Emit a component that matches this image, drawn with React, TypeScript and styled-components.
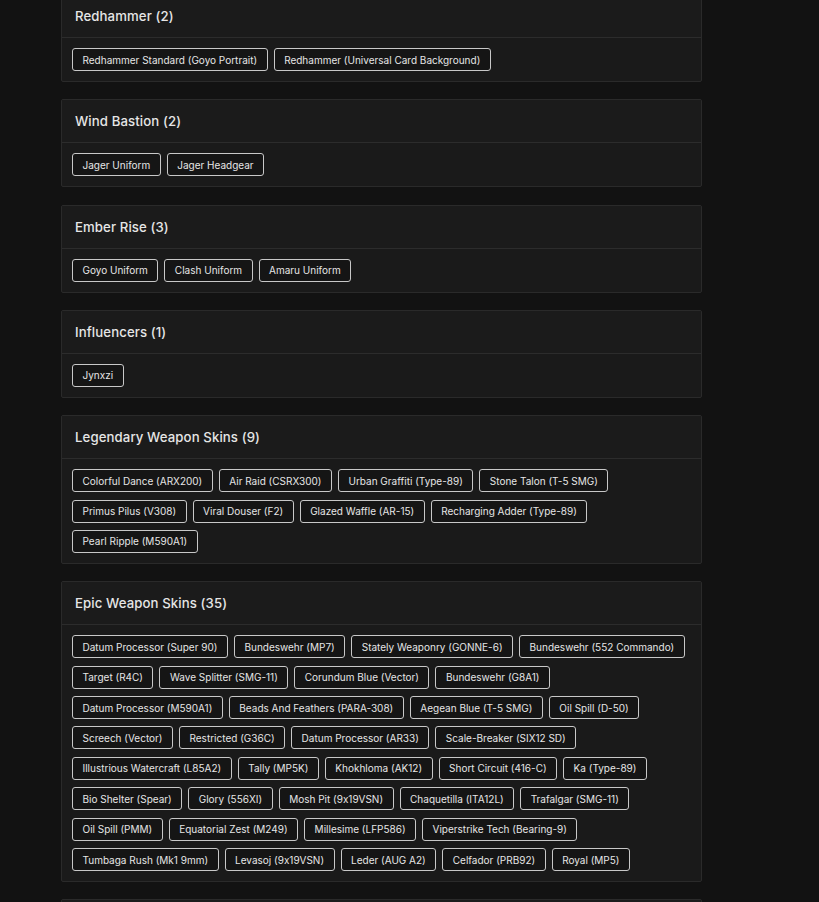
import { createGlobalStyle } from "styled-components";
import styled from "styled-components";

type Group = { name: string; items: string[] };

const groups: Group[] = [
  {
    name: "Redhammer",
    items: ["Redhammer Standard (Goyo Portrait)", "Redhammer (Universal Card Background)"],
  },
  { name: "Wind Bastion", items: ["Jager Uniform", "Jager Headgear"] },
  { name: "Ember Rise", items: ["Goyo Uniform", "Clash Uniform", "Amaru Uniform"] },
  { name: "Influencers", items: ["Jynxzi"] },
  {
    name: "Legendary Weapon Skins",
    items: [
      "Colorful Dance (ARX200)",
      "Air Raid (CSRX300)",
      "Urban Graffiti (Type-89)",
      "Stone Talon (T-5 SMG)",
      "Primus Pilus (V308)",
      "Viral Douser (F2)",
      "Glazed Waffle (AR-15)",
      "Recharging Adder (Type-89)",
      "Pearl Ripple (M590A1)",
    ],
  },
  {
    name: "Epic Weapon Skins",
    items: [
      "Datum Processor (Super 90)",
      "Bundeswehr (MP7)",
      "Stately Weaponry (GONNE-6)",
      "Bundeswehr (552 Commando)",
      "Target (R4C)",
      "Wave Splitter (SMG-11)",
      "Corundum Blue (Vector)",
      "Bundeswehr (G8A1)",
      "Datum Processor (M590A1)",
      "Beads And Feathers (PARA-308)",
      "Aegean Blue (T-5 SMG)",
      "Oil Spill (D-50)",
      "Screech (Vector)",
      "Restricted (G36C)",
      "Datum Processor (AR33)",
      "Scale-Breaker (SIX12 SD)",
      "Illustrious Watercraft (L85A2)",
      "Tally (MP5K)",
      "Khokhloma (AK12)",
      "Short Circuit (416-C)",
      "Ka (Type-89)",
      "Bio Shelter (Spear)",
      "Glory (556XI)",
      "Mosh Pit (9x19VSN)",
      "Chaquetilla (ITA12L)",
      "Trafalgar (SMG-11)",
      "Oil Spill (PMM)",
      "Equatorial Zest (M249)",
      "Millesime (LFP586)",
      "Viperstrike Tech (Bearing-9)",
      "Tumbaga Rush (Mk1 9mm)",
      "Levasoj (9x19VSN)",
      "Leder (AUG A2)",
      "Celfador (PRB92)",
      "Royal (MP5)",
    ],
  },
];

function App() {
  return (
    <>
      <GlobalStyle />
      <Page>
        <List>
          {groups.map((g) => (
            <Card key={g.name}>
              <Header>
                <Title>
                  {g.name} ({g.items.length})
                </Title>
              </Header>
              <Body>
                {g.items.map((item) => (
                  <Chip key={item}>{item}</Chip>
                ))}
              </Body>
            </Card>
          ))}
          {/* next section, scrolled below the fold */}
          <Card>
            <Header />
          </Card>
        </List>
      </Page>
    </>
  );
}

export default App;

const GlobalStyle = createGlobalStyle`
  html, body {
    margin: 0;
    padding: 0;
    background: #121212;
    overflow: hidden;
  }
  body {
    font-family: Inter, "Noto Sans", sans-serif;
    font-feature-settings: "calt" 0;
  }
`;

const Page = styled.div`
  height: 902px;
  overflow: hidden;
  padding-left: 61px;
`;

const List = styled.div`
  display: flex;
  flex-direction: column;
  gap: 17.3px;
  width: 641px;
  margin-top: -6px;
`;

const Card = styled.section`
  background: #1a1a1a;
  border: 1px solid #2a2a2a;
  border-radius: 2px;
`;

const Header = styled.div`
  height: 42px;
  display: flex;
  align-items: center;
  padding: 0 13px;
  background: #1b1b1b;
  border-bottom: 1px solid #2c2c2c;
`;

const Title = styled.h3`
  margin: 0;
  font-size: 13.2px;
  font-weight: 500;
  color: #e6e6e6;
  letter-spacing: 0.1px;
`;

const Body = styled.div`
  display: flex;
  flex-wrap: wrap;
  gap: 7.4px 6px;
  padding: 10px;
`;

const Chip = styled.span`
  display: inline-flex;
  align-items: center;
  height: 23px;
  box-sizing: border-box;
  padding: 0 9.5px;
  background: #151515;
  border: 1px solid #c8c8c8;
  border-radius: 3px;
  font-size: 10px;
  color: #e6e6e6;
  white-space: nowrap;
`;
